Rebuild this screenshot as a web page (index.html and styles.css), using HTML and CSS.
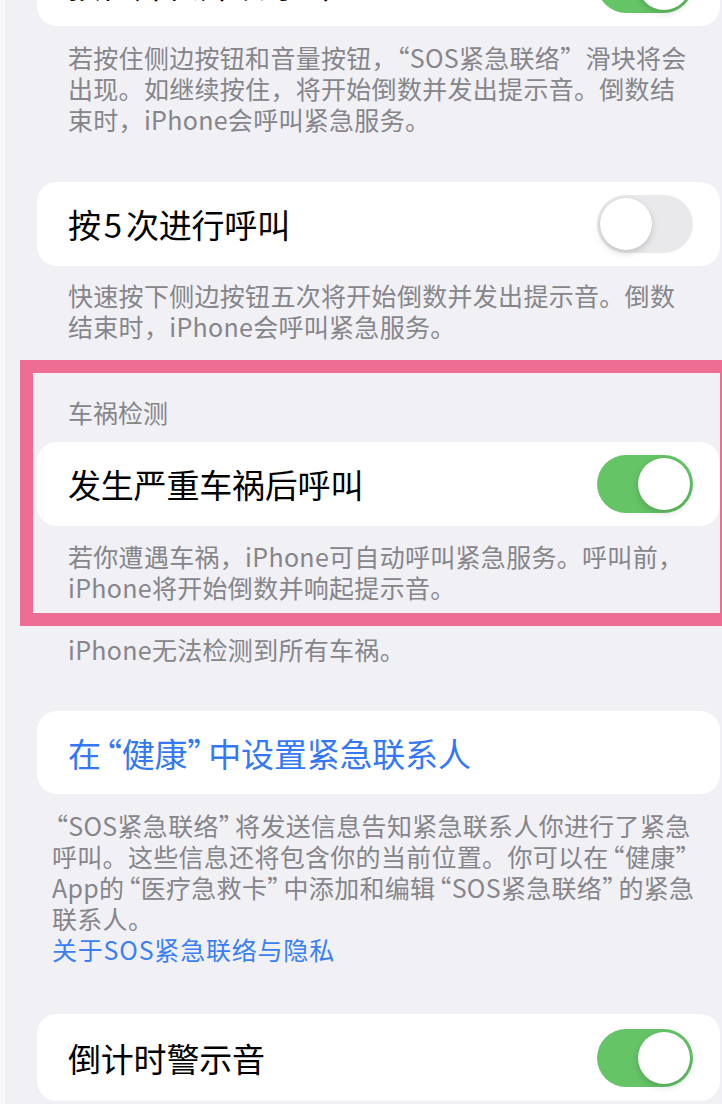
FILE: index.html
```html
<!DOCTYPE html>
<html lang="zh-CN">
<head>
<meta charset="utf-8">
<title>SOS紧急联络</title>
<link rel="stylesheet" href="styles.css">
</head>
<body>
<div class="page">
  <div class="card card-first">
    <span class="title">按住并松开以呼叫</span>
    <span class="switch on"><span class="knob"></span></span>
  </div>
  <p class="footer f1">若按住侧边按钮和音量按钮，“SOS紧急联络”滑块将会<br>出现。如继续按住，将开始倒数并发出提示音。倒数结<br>束时，iPhone会呼叫紧急服务。</p>

  <div class="card card-second">
    <span class="title">按<span class="num">5</span>次进行呼叫</span>
    <span class="switch"><span class="knob"></span></span>
  </div>
  <p class="footer f2">快速按下侧边按钮五次将开始倒数并发出提示音。倒数<br>结束时，iPhone会呼叫紧急服务。</p>

  <section class="highlight">
    <h2 class="header">车祸检测</h2>
    <div class="card">
      <span class="title">发生严重车祸后呼叫</span>
      <span class="switch on"><span class="knob"></span></span>
    </div>
    <p class="footer f3">若你遭遇车祸，iPhone可自动呼叫紧急服务。呼叫前，<br>iPhone将开始倒数并响起提示音。</p>
  </section>
  <p class="footer f4">iPhone无法检测到所有车祸。</p>

  <div class="card card-link">
    <span class="title link">在<span class="ql">“</span>健康<span class="qr">”</span>中设置紧急联系人</span>
  </div>
  <p class="footer f5"><span class="ql">“</span>SOS紧急联络<span class="qr">”</span>将发送信息告知紧急联系人你进行了紧急<br>呼叫。这些信息还将包含你的当前位置。你可以在<span class="ql">“</span>健康<span class="qr">”</span><br>App的<span class="ql">“</span>医疗急救卡<span class="qr">”</span>中添加和编辑<span class="ql">“</span>SOS紧急联络<span class="qr">”</span>的紧急<br>联系人。<br><span class="link">关于SOS紧急联络与隐私</span></p>

  <div class="card card-last">
    <span class="title">倒计时警示音</span>
    <span class="switch on"><span class="knob"></span></span>
  </div>
</div>
</body>
</html>
```

FILE: styles.css
```css
html, body {
  margin: 0;
  padding: 0;
}
body {
  background: linear-gradient(to right, #f8f8fa 0 5px, #f1f0f5 5px);
  font-family: "Noto Sans CJK SC", "Noto Sans", sans-serif;
  width: 722px;
  height: 1104px;
  overflow: hidden;
}
.page {
  width: 722px;
  overflow: hidden;
  display: flex;
  flex-direction: column;
  align-items: flex-start;
}
.card {
  display: flex;
  align-items: center;
  justify-content: space-between;
  box-sizing: border-box;
  margin-left: 37px;
  width: 683px;
  height: 84px;
  padding: 0 27px 0 31px;
  background: #ffffff;
  border-radius: 20px;
  flex-shrink: 0;
}
.card-first { margin-top: -58px; }
.card-second { margin-top: 47px; }
.card-link { margin-top: 46px; height: 83px; }
.card-last { margin-top: 49px; height: 87px; }
.title {
  font-size: 33px;
  line-height: 40px;
  color: #000000;
  letter-spacing: -0.2px;
}
.num {
  margin: 0 4px 0 3px;
}
.ql { margin-left: -0.36em; }
.qr { margin-right: -0.36em; }
.link {
  color: #3478f6;
}
.footer {
  margin: 0;
  box-sizing: border-box;
  padding: 16px 0 0 68px;
  font-size: 25px;
  line-height: 31px;
  letter-spacing: 0.3px;
  color: #85858a;
  white-space: nowrap;
}
.f2 { padding-top: 14px; }
.f4 { padding-top: 8px; }
.f5 { padding: 16px 0 0 52px; }
.f5 .link { color: #3a7ff5; letter-spacing: 0.8px; }

.highlight {
  margin: 18px 0 0 20px;
  box-sizing: border-box;
  width: 713px;
  border: 13px solid #ee6d93;
  padding-bottom: 10px;
}
.header {
  margin: 0;
  padding: 24px 0 14px 35px;
  font-size: 25px;
  line-height: 31px;
  font-weight: normal;
  color: #85858a;
}
.highlight .card { margin-left: 4px; }
.highlight .footer { padding: 15px 0 0 35px; }

.switch {
  display: flex;
  align-items: center;
  justify-content: flex-start;
  box-sizing: border-box;
  width: 96px;
  height: 58px;
  padding: 3px;
  border-radius: 29px;
  background: #e9e9eb;
  flex-shrink: 0;
}
.switch.on {
  background: #65c466;
  justify-content: flex-end;
}
.knob {
  width: 52px;
  height: 52px;
  border-radius: 50%;
  background: #ffffff;
  box-shadow: 0 3px 7px rgba(0, 0, 0, 0.16), 0 0 1px rgba(0, 0, 0, 0.12);
}
```
